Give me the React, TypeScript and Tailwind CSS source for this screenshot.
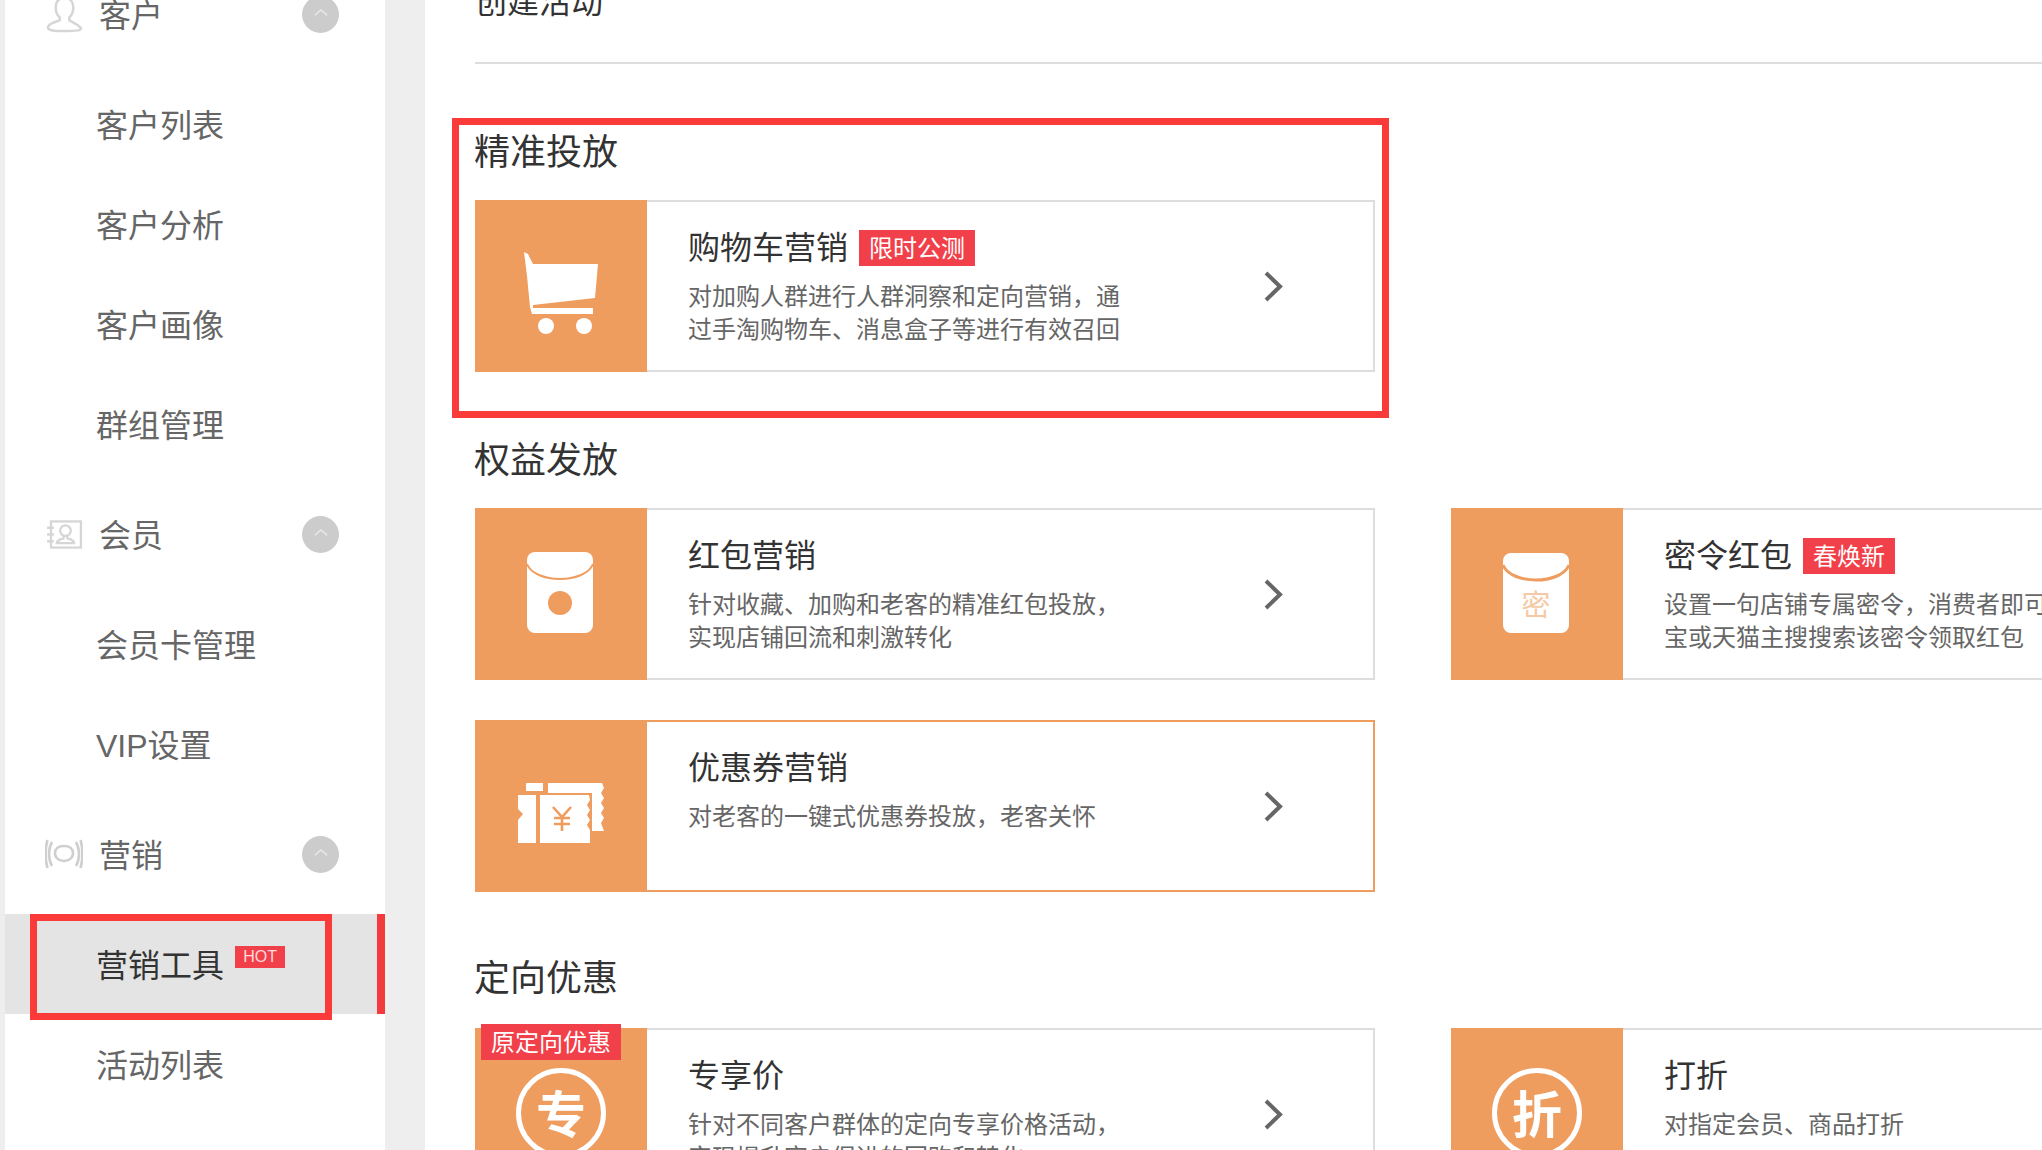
const font = "font-['Liberation_Sans','Noto_Sans_CJK_SC',sans-serif]";

const ChevronRight = () => (
  <svg viewBox="0 0 19 31" className="w-[19px] h-[31px]" fill="none" stroke="#666" strokeWidth="4">
    <path d="M2 2 L16 15.5 L2 29" />
  </svg>
);

const UpCircle = () => (
  <span className="ml-auto mr-[46px] w-[37px] h-[37px] rounded-full bg-[#cccccc] flex items-center justify-center">
    <svg viewBox="0 0 16 10" className="w-[14px] h-[9px] mb-[3px]" fill="none" stroke="#e8e8e8" strokeWidth="1.6">
      <path d="M1 8 L8 2 L15 8" />
    </svg>
  </span>
);

const UserIcon = () => (
  <svg viewBox="0 0 38 38" className="w-[37px] h-[37px]" fill="none" stroke="#d6d6d6" strokeWidth="2.6">
    <path d="M19 2 C13 2 10 6 10 12 C10 17 12 20 14 22 L14 25 C9 27 3 28 2 32 C2 35 6 36 19 36 C32 36 36 35 36 33 C33 29 29 28 24 25 L24 22 C26 20 28 17 28 12 C28 6 25 2 19 2 Z" />
  </svg>
);

const MemberIcon = () => (
  <svg viewBox="0 0 38 30" className="w-[37px] h-[29px]" fill="none" stroke="#d6d6d6" strokeWidth="2.4">
    <rect x="5" y="1.5" width="31" height="27" />
    <path d="M1 8 H8 M1 15 H8 M1 22 H8" />
    <circle cx="20" cy="11" r="5.5" />
    <path d="M18 16 V19 C14 20 11 21 11 24 H29 C29 21 26 20 22 19 V16" />
  </svg>
);

const SignalIcon = () => (
  <svg viewBox="0 0 38 30" className="w-[38px] h-[30px]" fill="none" stroke="#cfcfcf" strokeWidth="2.6">
    <path d="M19 7 C25 7 28 10 28 14 C28 19 24 22 19 22 C14 22 10 19 10 14 C10 10 13 7 19 7 Z" />
    <path d="M7 3 C3 10 3 20 7 27 M2.5 1 C0 9 0 21 2.5 29 M31 3 C35 10 35 20 31 27 M35.5 1 C38 9 38 21 35.5 29" />
  </svg>
);

const CartIcon = () => (
  <svg viewBox="0 0 74 82" className="w-[74px] h-[82px] mt-[14px] mr-[1px]" fill="#fff">
    <path d="M0 0 L4 2 L9 12 L74 12 L71 46 L9 53 L9 56 L69 56 L69 62 L8 62 L6 55 L3 24 Z" />
    <ellipse cx="22" cy="74" rx="8" ry="8" />
    <ellipse cx="60" cy="74" rx="8" ry="8" />
  </svg>
);

const PacketIcon = () => (
  <svg viewBox="0 0 66 81" className="w-[66px] h-[81px] mb-[3px] mr-[2px]">
    <rect x="0" y="0" width="66" height="81" rx="8" fill="#fff" />
    <path d="M0 12 C8 32 58 32 66 12" fill="none" stroke="#ef9c5f" strokeWidth="2" />
    <circle cx="33" cy="51" r="12" fill="#ef9c5f" />
  </svg>
);

const SecretIcon = () => (
  <div className="relative w-[66px] h-[80px] mb-[2px] mr-[2px] flex items-center justify-center">
    <svg viewBox="0 0 66 80" className="absolute inset-0 w-[66px] h-[80px]">
      <rect x="0" y="0" width="66" height="80" rx="8" fill="#fff" />
      <path d="M0 12 C8 32 58 32 66 12" fill="none" stroke="#ef9c5f" strokeWidth="3" />
    </svg>
    <span className="relative mt-[26px] text-[29px] leading-none text-[#f6c9a6]">密</span>
  </div>
);

const CouponIcon = () => (
  <svg viewBox="0 0 86 60" className="w-[86px] h-[60px] mt-[14px]">
    <path d="M8 0 H25 V8 H8 Z M30 0 H84 L86 5 L83 10 L86 15 L83 20 L86 25 L83 30 L86 35 L83 40 L86 48 H74 V10 H30 Z" fill="#fff" />
    <path d="M0 12 H18 V60 H0 V37 L5 31 L0 26 Z" fill="#fff" />
    <path d="M22 12 H71 L72 17 L69 22 L72 27 L69 32 L72 37 L69 42 L72 47 L72 60 H22 Z" fill="#fff" />
    <path d="M35 24 L44 34 L53 24 M44 34 V48 M36 35 H52 M36 41 H52" fill="none" stroke="#ef9c5f" strokeWidth="2.6" />
  </svg>
);

const CircleChar = ({ ch }: { ch: string }) => (
  <div className="mt-[40px] w-[90px] h-[90px] shrink-0 rounded-full border-[5px] border-white flex items-center justify-center">
    <span className="pt-[5px] text-[50px] leading-none font-bold text-white">{ch}</span>
  </div>
);

type CardProps = {
  icon: React.ReactNode;
  title: string;
  tag?: string;
  lines: string[];
  active?: boolean;
  corner?: string;
  alignTop?: boolean;
};

const Card = ({ icon, title, tag, lines, active, corner, alignTop }: CardProps) => (
  <div className={`relative w-[900px] h-[172px] flex shrink-0 border-2 ${active ? "border-[#ef9c5f]" : "border-[#dddddd]"}`}>
    <div className={`-m-[2px] mr-0 w-[172px] h-[172px] shrink-0 bg-[#ef9c5f] flex justify-center overflow-hidden ${alignTop ? "items-start" : "items-center"}`}>
      {icon}
    </div>
    {corner && (
      <span className="absolute left-[4px] -top-[6px] w-[140px] h-[36px] bg-[#f2404a] text-white text-[24px] leading-[38px] text-center">
        {corner}
      </span>
    )}
    <div className="pl-[41px] pt-[26px] flex-1">
      <div className="flex items-center h-[40px]">
        <span className="text-[32px] leading-[40px] text-[#333333]">{title}</span>
        {tag && (
          <span className="ml-[11px] h-[36px] px-[10px] bg-[#f2404a] text-white text-[24px] leading-[38px]">{tag}</span>
        )}
      </div>
      <div className="mt-[12px] text-[24px] leading-[33px] text-[#666666] whitespace-nowrap">
        {lines.map((l) => (
          <div key={l}>{l}</div>
        ))}
      </div>
    </div>
    <div className="absolute right-[90px] top-[69px]">
      <ChevronRight />
    </div>
  </div>
);

const Head = ({ icon, label }: { icon: React.ReactNode; label: string }) => (
  <div className="h-[120px] flex items-center pl-[40px]">
    <span className="w-[38px] flex justify-center">{icon}</span>
    <span className="ml-[16px] pt-[3px] text-[32px] text-[#666666]">{label}</span>
    <UpCircle />
  </div>
);

const Sub = ({ label }: { label: string }) => (
  <div className="h-[100px] flex items-center pl-[91px] pt-[3px] text-[32px] text-[#666666]">{label}</div>
);

const Sidebar = () => (
  <aside className="w-[380px] ml-[5px] shrink-0 bg-white -mt-[46px]">
    <Head icon={<UserIcon />} label="客户" />
    <Sub label="客户列表" />
    <Sub label="客户分析" />
    <Sub label="客户画像" />
    <Sub label="群组管理" />
    <Head icon={<MemberIcon />} label="会员" />
    <Sub label="会员卡管理" />
    <Sub label="VIP设置" />
    <Head icon={<SignalIcon />} label="营销" />
    <div className="relative h-[100px] bg-[#e4e4e4] flex items-center pl-[91px] pt-[3px] text-[32px] text-[#333333] border-r-[8px] border-[#f33b3f]">
      营销工具
      <span className="ml-[11px] mb-[18px] w-[50px] h-[22px] bg-[#f2404a] text-[#ffd9dc] text-[16px] leading-[22px] text-center">
        HOT
      </span>
      <div className="absolute left-[25px] top-0 w-[302px] h-[106px] border-[7px] border-[#fb3a3a]" />
    </div>
    <Sub label="活动列表" />
  </aside>
);

const SectionTitle = ({ text }: { text: string }) => (
  <h2 className="h-[48px] -ml-[1px] text-[36px] leading-[52px] font-normal text-[#333333]">{text}</h2>
);

export default function App() {
  return (
    <div className={`${font} w-[2042px] h-[1150px] overflow-hidden bg-[#eeeeee] flex`}>
      <Sidebar />
      <main className="ml-[40px] flex-1 bg-white pl-[50px] overflow-hidden">
        <div className="-mt-[20px] h-[84px] w-[1567px] border-b-2 border-[#dddddd] text-[32px] leading-[44px] text-[#333333]">
          创建活动
        </div>
        <section className="relative mt-[63px]">
          <SectionTitle text="精准投放" />
          <div className="mt-[25px]">
            <Card
              icon={<CartIcon />}
              title="购物车营销"
              tag="限时公测"
              lines={["对加购人群进行人群洞察和定向营销，通", "过手淘购物车、消息盒子等进行有效召回"]}
            />
          </div>
          <div className="absolute -left-[23px] -top-[9px] w-[937px] h-[300px] border-[7px] border-[#fb3a3a]" />
        </section>
        <section className="mt-[63px]">
          <SectionTitle text="权益发放" />
          <div className="mt-[25px] w-[1952px] flex flex-wrap gap-x-[76px] gap-y-[40px]">
            <Card
              icon={<PacketIcon />}
              title="红包营销"
              lines={["针对收藏、加购和老客的精准红包投放，", "实现店铺回流和刺激转化"]}
            />
            <Card
              icon={<SecretIcon />}
              title="密令红包"
              tag="春焕新"
              lines={["设置一句店铺专属密令，消费者即可在淘", "宝或天猫主搜搜索该密令领取红包"]}
            />
            <Card active icon={<CouponIcon />} title="优惠券营销" lines={["对老客的一键式优惠券投放，老客关怀"]} />
          </div>
        </section>
        <section className="mt-[61px]">
          <SectionTitle text="定向优惠" />
          <div className="mt-[27px] w-[1952px] flex flex-wrap gap-x-[76px] gap-y-[40px]">
            <Card
              alignTop
              corner="原定向优惠"
              icon={<CircleChar ch="专" />}
              title="专享价"
              lines={["针对不同客户群体的定向专享价格活动，", "实现提升客户促进的回购和转化"]}
            />
            <Card alignTop icon={<CircleChar ch="折" />} title="打折" lines={["对指定会员、商品打折"]} />
          </div>
        </section>
      </main>
    </div>
  );
}
